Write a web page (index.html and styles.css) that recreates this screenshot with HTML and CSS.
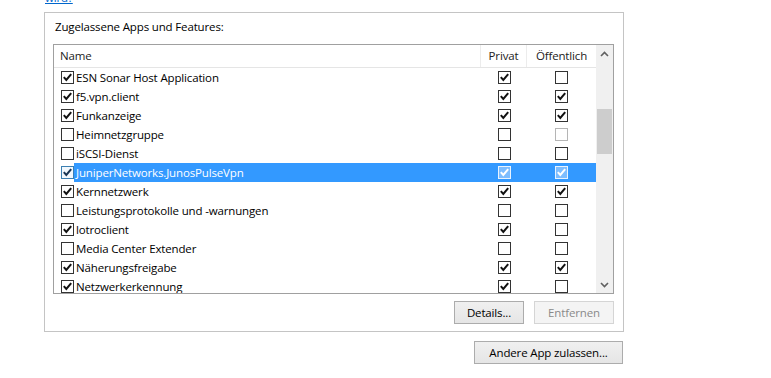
FILE: index.html
```html
<!DOCTYPE html>
<html lang="de">
<head>
<meta charset="utf-8">
<title>Zugelassene Apps</title>
<link rel="stylesheet" href="styles.css">
</head>
<body>
<svg width="0" height="0" class="defs" aria-hidden="true">
  <symbol id="chk" viewBox="0 0 11 11"><path d="M1.8 5.2 L4.3 8 L9.2 2.2" fill="none" stroke="currentColor" stroke-width="2" stroke-linejoin="miter"/></symbol>
</svg>
<div class="page">
  <a class="link" href="#">wird?</a>
  <div class="group">
    <div class="label">Zugelassene Apps und Features:</div>
    <div class="listbox">
      <div class="table">
        <div class="head">
          <div class="hcell hname">Name</div>
          <div class="hcell hc">Privat</div>
          <div class="hcell hc">Öffentlich</div>
        </div>
        <div class="rows">
          <div class="row"><div class="c0"><span class="cb on"><svg><use href="#chk"/></svg></span></div><div class="nm">ESN Sonar Host Application</div><div class="cc"><span class="cb on"><svg><use href="#chk"/></svg></span></div><div class="cc"><span class="cb"></span></div></div>
          <div class="row"><div class="c0"><span class="cb on"><svg><use href="#chk"/></svg></span></div><div class="nm">f5.vpn.client</div><div class="cc"><span class="cb on"><svg><use href="#chk"/></svg></span></div><div class="cc"><span class="cb on"><svg><use href="#chk"/></svg></span></div></div>
          <div class="row"><div class="c0"><span class="cb on"><svg><use href="#chk"/></svg></span></div><div class="nm">Funkanzeige</div><div class="cc"><span class="cb on"><svg><use href="#chk"/></svg></span></div><div class="cc"><span class="cb on"><svg><use href="#chk"/></svg></span></div></div>
          <div class="row"><div class="c0"><span class="cb"></span></div><div class="nm">Heimnetzgruppe</div><div class="cc"><span class="cb"></span></div><div class="cc"><span class="cb dis"></span></div></div>
          <div class="row"><div class="c0"><span class="cb"></span></div><div class="nm">iSCSI-Dienst</div><div class="cc"><span class="cb"></span></div><div class="cc"><span class="cb"></span></div></div>
          <div class="row sel"><div class="c0"><span class="cb on foc"><svg><use href="#chk"/></svg></span></div><div class="nm">JuniperNetworks.JunosPulseVpn</div><div class="cc"><span class="cb on insel"><svg><use href="#chk"/></svg></span></div><div class="cc"><span class="cb on insel"><svg><use href="#chk"/></svg></span></div></div>
          <div class="row"><div class="c0"><span class="cb on"><svg><use href="#chk"/></svg></span></div><div class="nm">Kernnetzwerk</div><div class="cc"><span class="cb on"><svg><use href="#chk"/></svg></span></div><div class="cc"><span class="cb on"><svg><use href="#chk"/></svg></span></div></div>
          <div class="row"><div class="c0"><span class="cb"></span></div><div class="nm">Leistungsprotokolle und -warnungen</div><div class="cc"><span class="cb"></span></div><div class="cc"><span class="cb"></span></div></div>
          <div class="row"><div class="c0"><span class="cb on"><svg><use href="#chk"/></svg></span></div><div class="nm">lotroclient</div><div class="cc"><span class="cb on"><svg><use href="#chk"/></svg></span></div><div class="cc"><span class="cb"></span></div></div>
          <div class="row"><div class="c0"><span class="cb"></span></div><div class="nm">Media Center Extender</div><div class="cc"><span class="cb"></span></div><div class="cc"><span class="cb"></span></div></div>
          <div class="row"><div class="c0"><span class="cb on"><svg><use href="#chk"/></svg></span></div><div class="nm">Näherungsfreigabe</div><div class="cc"><span class="cb on"><svg><use href="#chk"/></svg></span></div><div class="cc"><span class="cb on"><svg><use href="#chk"/></svg></span></div></div>
          <div class="row"><div class="c0"><span class="cb on"><svg><use href="#chk"/></svg></span></div><div class="nm">Netzwerkerkennung</div><div class="cc"><span class="cb on"><svg><use href="#chk"/></svg></span></div><div class="cc"><span class="cb"></span></div></div>
        </div>
      </div>
      <div class="scrollbar">
        <div class="sbtn"><svg width="9" height="6" viewBox="0 0 9 6"><path d="M1 5 L4.5 1.5 L8 5" fill="none" stroke="#606060" stroke-width="1.6"/></svg></div>
        <div class="track"><div class="thumb"></div></div>
        <div class="sbtn"><svg width="9" height="6" viewBox="0 0 9 6"><path d="M1 1 L4.5 4.5 L8 1" fill="none" stroke="#606060" stroke-width="1.6"/></svg></div>
      </div>
    </div>
    <div class="btnrow">
      <button class="btn details">Details...</button>
      <button class="btn remove" disabled>Entfernen</button>
    </div>
  </div>
  <div class="outerrow">
    <button class="btn other">Andere App zulassen...</button>
  </div>
</div>
</body>
</html>
```
FILE: styles.css
```css
html, body {
  margin: 0;
  padding: 0;
  background: #ffffff;
}
body {
  font-family: "Open Sans", "Noto Sans", sans-serif;
  font-size: 11.5px;
  letter-spacing: -0.15px;
  line-height: 16px;
  color: #000000;
  overflow: hidden;
}
.defs {
  position: absolute;
  width: 0;
  height: 0;
}
.page {
  width: 580px;
  margin-left: 44px;
  display: flex;
  flex-direction: column;
}
.link {
  display: block;
  margin-top: -10px;
  margin-left: 1px;
  height: 16px;
  color: #0066cc;
  text-decoration: underline;
  align-self: flex-start;
}
.group {
  margin-top: 6px;
  border: 1px solid #c4c4c4;
  padding: 6px 9px 7px 8px;
  display: flex;
  flex-direction: column;
}
.label {
  padding-left: 2px;
  height: 16px;
  margin-bottom: 9px;
}
.listbox {
  height: 250px;
  box-sizing: border-box;
  border: 1px solid #a0a0a0;
  display: flex;
}
.table {
  flex: 1;
  overflow: hidden;
}
.head {
  display: grid;
  grid-template-columns: 427px 46px 69px;
  height: 22px;
  border-bottom: 1px solid #e5e5e5;
}
.hcell {
  line-height: 22px;
  color: #222;
  border-right: 1px solid #ececec;
  white-space: nowrap;
}
.hcell:last-child { border-right: none; }
.hname { padding-left: 6px; }
.hc { text-align: center; }
.rows {
  display: flex;
  flex-direction: column;
}
.row {
  display: grid;
  grid-template-columns: 20px 407px 46px 69px;
  height: 19px;
  align-items: center;
}
.c0 {
  padding-left: 7px;
  display: flex;
  align-items: center;
  height: 19px;
}
.nm {
  padding-left: 2px;
  height: 19px;
  line-height: 19px;
  white-space: nowrap;
}
.cc {
  display: flex;
  align-items: center;
  justify-content: center;
  height: 19px;
}
.row.sel .nm,
.row.sel .cc {
  background: #3399ff;
  color: #ffffff;
}
.cb {
  display: inline-block;
  width: 13px;
  height: 13px;
  box-sizing: border-box;
  border: 1px solid #333333;
  background: #ffffff;
  color: #111111;
}
.cb svg {
  display: block;
  width: 11px;
  height: 11px;
}
.cb.dis { border-color: #b5b5b5; }
.cb.foc {
  border-color: #3c7fb1;
  background: #f2f8fd;
  color: #1a3553;
}
.cb.insel {
  border-color: #e8f3ff;
  background: #7dbdff;
  color: #ffffff;
}
.scrollbar {
  width: 17px;
  background: #f0f0f0;
  display: flex;
  flex-direction: column;
}
.sbtn {
  height: 17px;
  display: flex;
  align-items: center;
  justify-content: center;
}
.track {
  flex: 1;
  padding-top: 47px;
}
.thumb {
  height: 45px;
  margin: 0 1px;
  background: #cdcdcd;
}
.btnrow {
  margin-top: 7px;
  display: flex;
  justify-content: flex-end;
  gap: 10px;
}
.btn {
  height: 23px;
  box-sizing: border-box;
  border: 1px solid #acacac;
  background: linear-gradient(#f0f0f0, #e5e5e5);
  font-family: "Open Sans", "Noto Sans", sans-serif;
  font-size: 11.5px;
  letter-spacing: -0.15px;
  color: #000;
  padding: 0;
}
.details { width: 70px; }
.remove {
  width: 80px;
  background: #f4f4f4;
  border-color: #d5d5d5;
  color: #8a8a8a;
}
.outerrow {
  margin-top: 9px;
  display: flex;
  justify-content: flex-end;
  padding-right: 1px;
}
.other { width: 149px; }
```
